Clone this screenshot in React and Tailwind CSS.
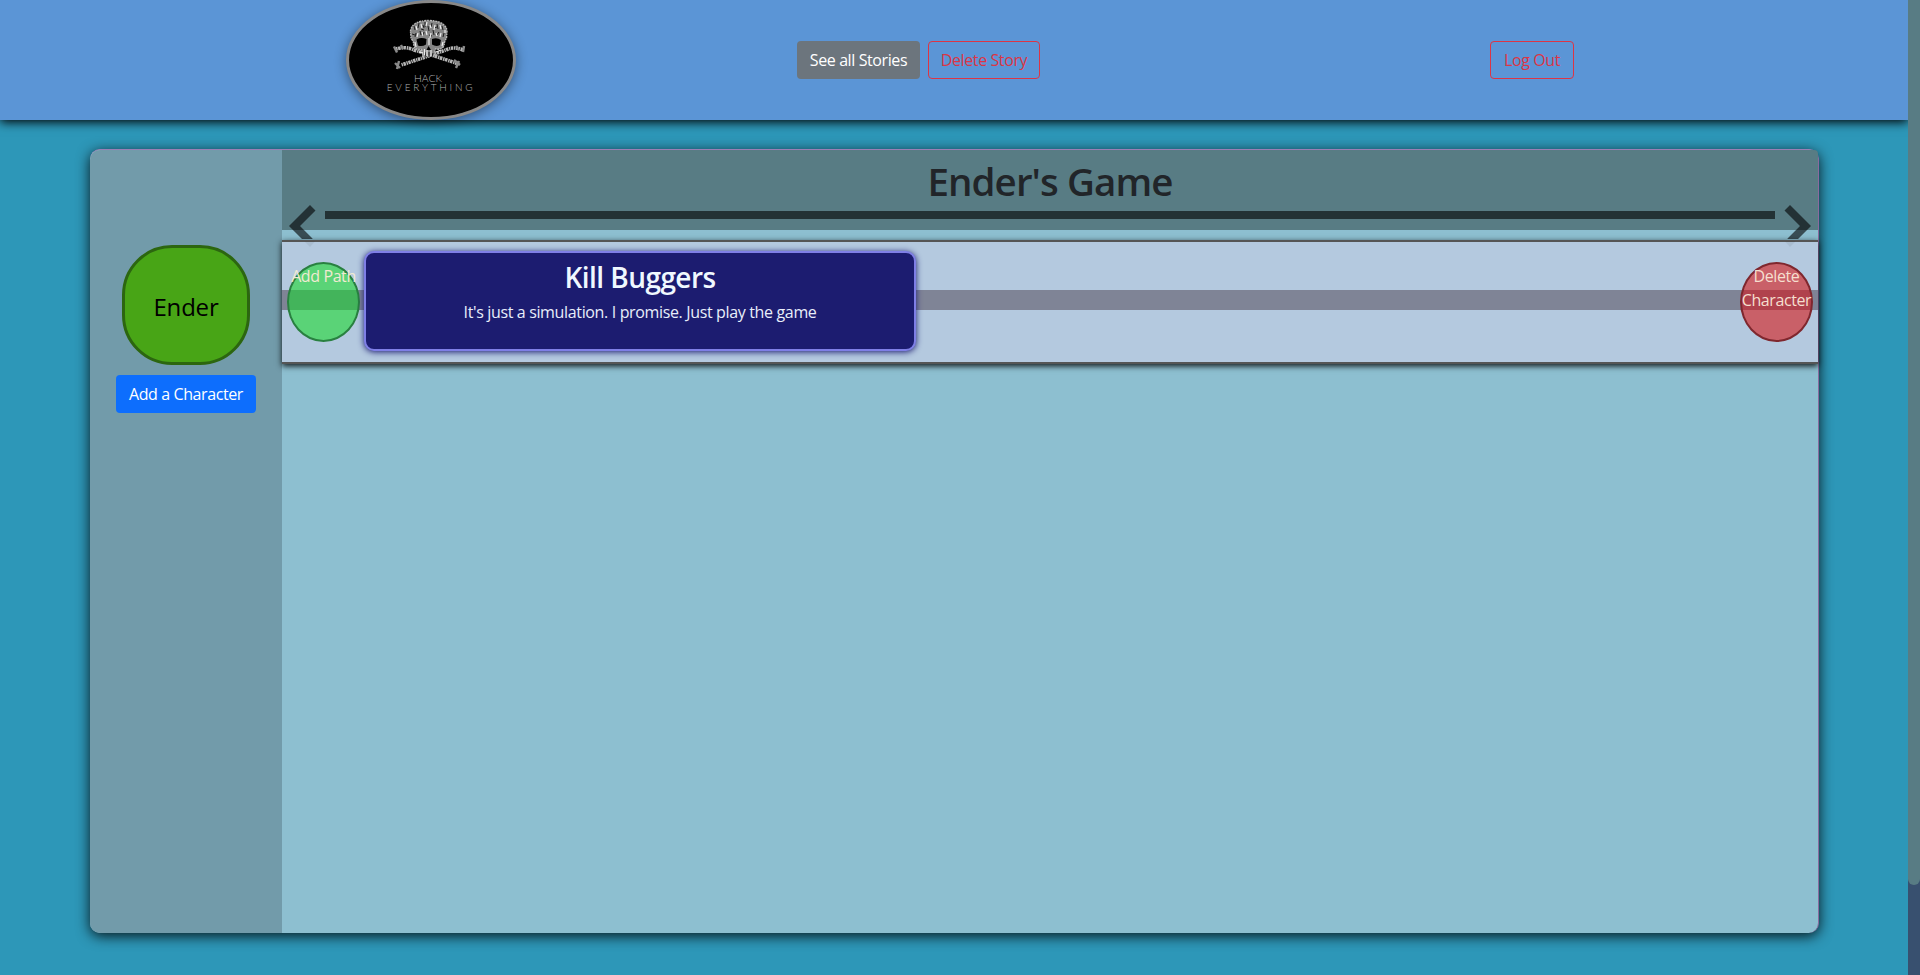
import React from "react";

const skull =
  "M64.500 31 Q66 20.500 83 20.500 Q100 21 101 31 L100.500 38 Q98 42 98 46 Q95 50 89.500 49 L88 56 L77 56 L75.500 49.500 Q68 50 68 46 Q68 42 65 38Z";

function Logo() {
  return (
    <div className="h-[120px] w-[170px] overflow-hidden rounded-[50%] border-3 border-[#888] bg-black shadow-[0_2px_12px_rgba(0,0,0,0.45)]">
      <svg viewBox="3 3 164 114" className="block h-full w-full">
        <g fill="none" stroke="#b5b5b5" strokeLinecap="butt">
          <path d="M50 49 Q60 46 68 50 Q90 56 111 63.5" strokeWidth="3.600" strokeDasharray="1.500 0.500 2.600 0.800" />
          <path d="M117 50 Q108 46 100 50 Q80 57 55 65" strokeWidth="3.600" strokeDasharray="2.400 0.600 1.300 0.700" />
          <path d="M48 46.500l3 6 M55 45l2 4 M118 46l-1 6 M110 46l3 4 M49 63l5 5 M53 61l-2 8 M113 61l-3 7 M108 60l6 5" strokeWidth="2.400" stroke="#8a8a8a" />
        </g>
        <path d={skull} fill="#858585" />
        <path d={skull} fill="none" stroke="#b8b8b8" strokeWidth="1.400" strokeDasharray="1.500 1 2.200 0.700" />
        <g stroke="#111" strokeWidth="0.900" fill="none">
          <path d="M68 26l1 4 M70 33l-1 4 M73 23l-1 5 M74 31l1 4 M77 25l1 3 M79 22v5 M78 32l-1 4 M82 26l1 5 M86 23l-1 4 M87 30l1 5 M91 24l1 5 M93 32l-2 3 M96 26l1 4 M98 33l-1 4" />
          <path d="M79 52l1 5 M83 52v5 M87 53l-1 4 M66 34l3 1 M75 29l3 1 M88 28l3-1 M83 35l3 1" />
        </g>
        <g stroke="#ededed" strokeWidth="1.200" fill="none">
          <path d="M70 26l1 4 M72 33l-1 4 M75 24l1 4 M76 32l1 4 M81 22l-1 4 M80 31l1 4 M84 25l1 3 M85 33l-1 5 M89 25l-1 5 M90 33l1 3 M94 25l1 4 M95 33l-1 4 M99 30v3 M97 42l-1 4 M69 42l1 5" />
          <path d="M81 50v6 M85 50v6 M78.500 49v6 M83 38v7 M73 52l4 1 M90 52l5-2" />
        </g>
        <path d="M70.500 39.500 Q75 37 80.500 39 L80 44.500 Q76 47 72 45.500Z M86 39 Q91 37 95 40 L94 45 Q90 47 86 44.500Z M82.500 46l-2 4h4.500Z" fill="#000" />
        <text x="82" y="82.300" textAnchor="middle" textLength="28" lengthAdjust="spacingAndGlyphs" fill="#b8b8b8" className="font-['Lato',sans-serif] text-[9px] font-light">
          HACK
        </text>
        <text x="83.700" y="90.800" textAnchor="middle" textLength="86" lengthAdjust="spacing" fill="#b0b0b0" className="font-['Lato',sans-serif] text-[10px] font-light">
          EVERYTHING
        </text>
      </svg>
    </div>
  );
}

function Chevron({ flip }) {
  return (
    <svg viewBox="0 0 28 44" className={flip ? "h-[44px] w-[28px] -scale-x-100" : "h-[44px] w-[28px]"}>
      <path d="M21 1 L26.500 6.500 L11 22 L23.500 34.500 L23.500 35 L13 35 L0 22Z" fill="#000" fillOpacity="0.6" />
      <path d="M15.500 37.500 L26 37.500 L21 43Z" fill="#000" fillOpacity="0.06" />
    </svg>
  );
}

export default function App() {
  return (
    <div className="flex h-[975px] w-full overflow-hidden bg-[#2d97b8] font-['Open_Sans','Noto_Sans',sans-serif] text-base leading-6">
      <div className="flex min-w-0 flex-1 flex-col">
        <header className="flex h-[120px] shrink-0 bg-[#5b95d6] shadow-[0_2px_10px_#000]">
          <div className="ml-[346px] w-[451px]">
            <Logo />
          </div>
          <div className="flex items-center gap-2">
            <button className="h-[38px] w-[123px] rounded bg-[#6c757d] text-white tracking-[-0.4px]">See all Stories</button>
            <button className="h-[38px] w-[112px] rounded border border-[#dc3545] text-[#dc3545] tracking-[-0.4px]">Delete Story</button>
          </div>
          <div className="ml-[450px] flex items-center">
            <button className="h-[38px] w-[84px] rounded border border-[#dc3545] text-[#dc3545] tracking-[-0.4px]">Log Out</button>
          </div>
        </header>

        <main className="mt-[29px] ml-[90px] flex h-[784px] w-[1729px] shrink-0 rounded-[10px] border-t border-r border-t-[#9a7fb5] border-r-[#8a6a9e] bg-[#8dbfd0] shadow-[0_3px_14px_rgba(0,0,0,0.85)]">
          <aside className="flex w-[192px] shrink-0 flex-col items-center rounded-l-[10px] bg-[#729baa] pt-[95px]">
            <div className="flex h-[120px] w-[128px] items-center justify-center rounded-[50px] border-3 border-[#2c6610] bg-[#48a516] pt-[4px] text-2xl tracking-[-0.2px] text-black">
              Ender
            </div>
            <button className="mt-[10px] h-[38px] w-[140px] rounded bg-[#0d6efd] text-white tracking-[-0.4px]">Add a Character</button>
          </aside>

          <section className="flex min-w-0 flex-1 flex-col">
            <div className="relative h-[80px] rounded-tr-[4px] bg-[#587c84] pt-[7px]">
              <h1 className="text-center text-[38.5px] leading-[48px] font-semibold tracking-[-0.9px] text-[#212529]">Ender's Game</h1>
              <div className="mx-[43px] mt-[6px] h-2 bg-[#233235]" />
              <div className="absolute top-[54px] left-[7px] z-10">
                <Chevron />
              </div>
              <div className="absolute top-[54px] right-[7px] z-10">
                <Chevron flip />
              </div>
            </div>

            <div className="mt-[10px] h-[124px] border-y-2 border-[#555] bg-[#b4c9df] shadow-[0_2px_6px_rgba(0,0,0,0.9)]">
              <div className="flex h-full bg-[linear-gradient(to_bottom,transparent_48px,#7f8496_48px,#7f8496_68px,transparent_68px)] pr-[5px] pl-[5px]">
                <div className="mt-[20px] flex h-[80px] w-[73px] justify-center rounded-[50%] border-2 border-[#298040] bg-[linear-gradient(to_bottom,#5ad377_26px,#43b45b_26px,#43b45b_46px,#5ad377_46px)] text-[#f1ead2] whitespace-nowrap tracking-[-0.4px]">
                  Add Path
                </div>
                <article className="mt-[9px] ml-1 h-[100px] w-[552px] rounded-[10px] border-2 border-[#7f7fe6] bg-[#1c1c70] pt-[7px] text-center text-[#f0f8ff] shadow-[0_1px_6px_#191970]">
                  <h2 className="text-[28px] leading-[34px] font-semibold tracking-[-0.55px]">Kill Buggers</h2>
                  <p className="mt-[6px] tracking-[-0.35px] text-[#e8eefa]">It's just a simulation. I promise. Just play the game</p>
                </article>
                <div className="mt-[20px] ml-auto flex h-[80px] w-[73px] justify-center rounded-[50%] border-2 border-[#7f272e] bg-[linear-gradient(to_bottom,#c96068_26px,#b0424d_26px,#b0424d_46px,#c96068_46px)] text-center text-[#f5dfcf] tracking-[-0.4px]">
                  Delete
                  <br />
                  Character
                </div>
              </div>
            </div>
          </section>
        </main>
      </div>
      <div className="w-3 shrink-0 bg-[#38506f]">
        <div className="h-[885px] rounded-b-full bg-[#587c84]" />
      </div>
    </div>
  );
}
